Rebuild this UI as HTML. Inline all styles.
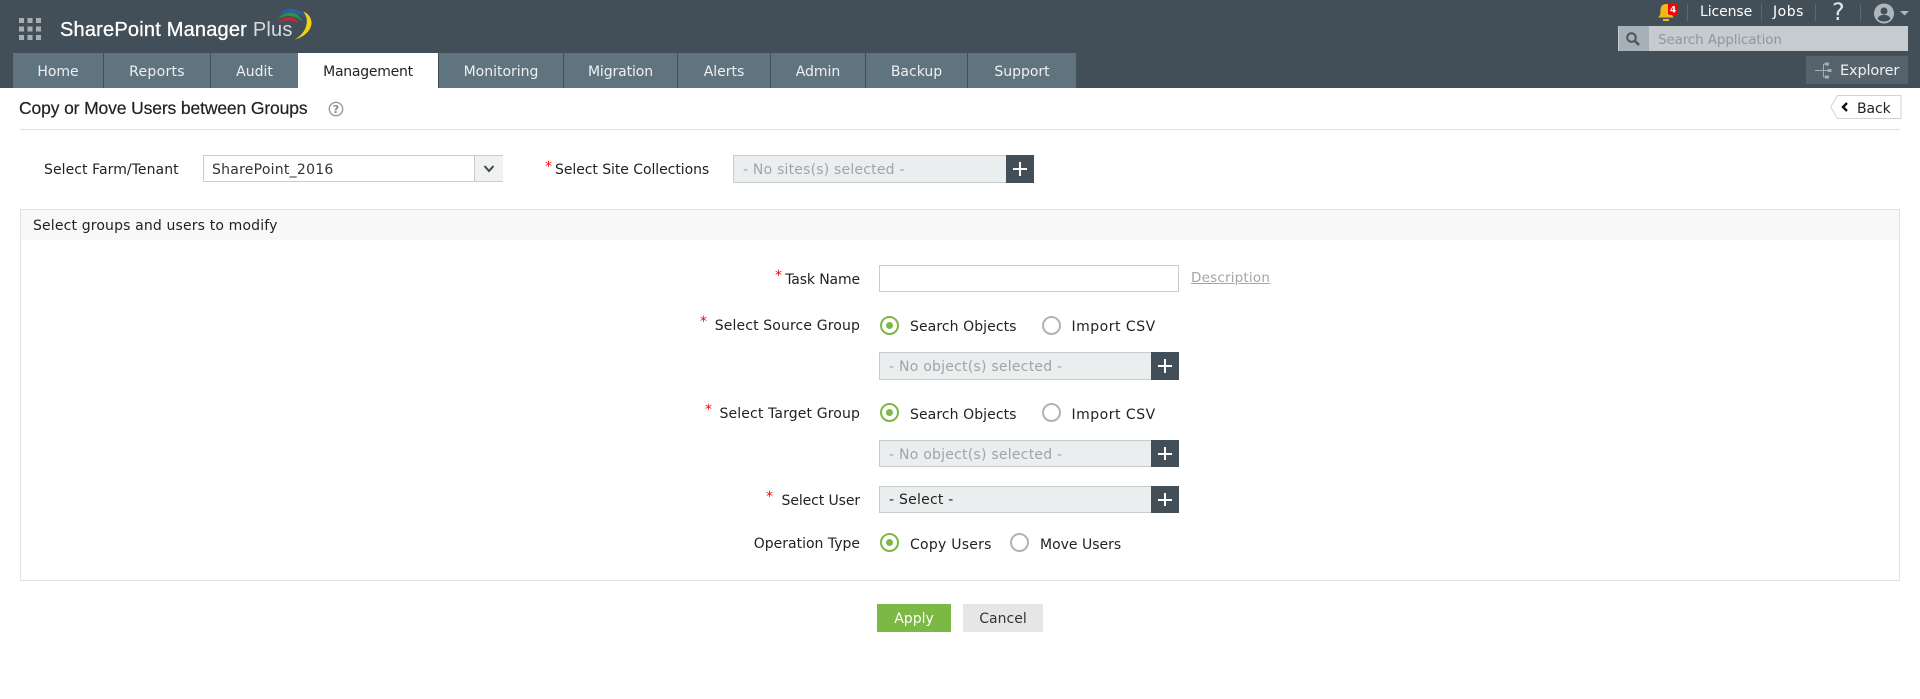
<!DOCTYPE html>
<html><head><meta charset="utf-8"><title>SharePoint Manager Plus</title>
<style>
html,body{margin:0;padding:0;background:#fff;width:1920px;height:699px;overflow:hidden}
body{font-family:"DejaVu Sans",sans-serif;font-size:14px;color:#222;position:relative}
.a{position:absolute;white-space:nowrap}
.t{position:absolute;white-space:nowrap;line-height:20px;height:20px}
.r{position:absolute;white-space:nowrap;line-height:20px;height:20px;right:1060px}
.star{position:absolute;color:#f00;line-height:20px;height:20px;font-size:14px}
#hd{position:absolute;left:0;top:0;width:1920px;height:88px;background:#434f58}
.tab{position:absolute;top:53px;height:35px;background:#60747f;color:#eef1f3;text-align:center;line-height:38px;font-size:14px}
.tab.on{background:#fff;color:#222}
.box{position:absolute;box-sizing:border-box;background:#ebeeef;border:1px solid #c9cccd;color:#a0a4a6;padding-left:9px;font-size:14px;line-height:28px;border-right:0;letter-spacing:.24px}
.plus{position:absolute;background:#434f58}
.plus:before{content:"";position:absolute;left:7px;right:7px;top:50%;height:2px;margin-top:-1px;background:#fff}
.plus:after{content:"";position:absolute;top:7px;bottom:7px;left:50%;width:2px;margin-left:-1px;background:#fff}
.rad{position:absolute;width:19px;height:19px;box-sizing:border-box;border-radius:50%;border:2px solid #aeb3b6;background:#fff}
.rad.on{border-color:#7cb844}
.rad.on:after{content:"";position:absolute;left:4px;top:4px;width:7px;height:7px;border-radius:50%;background:#7cb844}
</style></head><body>
<div id="hd"></div>
<svg class="a" style="left:19px;top:18px" width="23" height="23"><g fill="#a9aeb1"><rect width="5" height="5"/><rect x="8.500" width="5" height="5"/><rect x="17" width="5" height="5"/><rect y="8.500" width="5" height="5"/><rect x="8.500" y="8.500" width="5" height="5"/><rect x="17" y="8.500" width="5" height="5"/><rect y="17" width="5" height="5"/><rect x="8.500" y="17" width="5" height="5"/><rect x="17" y="17" width="5" height="5"/></g></svg>
<div class="a" style="left:60px;top:18px;line-height:24px;font-family:'Liberation Sans',sans-serif;font-size:20px;color:#fff;letter-spacing:.2px;-webkit-text-stroke:.3px #fff">SharePoint Manager <span style="color:#d8dcdf;-webkit-text-stroke:0">Plus</span></div>
<svg class="a" style="left:270px;top:4px" width="46" height="40" fill="none"><path d="M25 35.500C34 33 40.500 27 41.500 20C42 14 38 9 33 7.500C38 13 38 20 34 27C32 30 29 33 25 35.500Z" fill="#f0d313"/><path d="M9 10.500C14 4.500 24 3 30 7.500C33 9.500 35.500 12 36.500 14.500C31 9.500 22 7.500 15 9Z" fill="#2d5fa8"/><path d="M8 14.500C13 8.500 22 7 27 10.500C29 12 31.500 15 32.500 17.500C27 12.500 20 11 14 12.500Z" fill="#2c9440"/><path d="M8 19.500C12 13.500 19 11.500 24 14.500C26 15.500 28 18 28.500 20C24 16.500 19 15.500 14 16.500Z" fill="#d6202c"/></svg>

<div class="tab" style="left:13px;width:90px">Home</div>
<div class="tab" style="left:104px;width:106px;letter-spacing:.3px">Reports</div>
<div class="tab" style="left:211px;width:87px">Audit</div>
<div class="tab on" style="left:298px;width:140px;letter-spacing:-.25px">Management</div>
<div class="tab" style="left:439px;width:124px">Monitoring</div>
<div class="tab" style="left:564px;width:113px;letter-spacing:-.1px">Migration</div>
<div class="tab" style="left:678px;width:92px">Alerts</div>
<div class="tab" style="left:771px;width:94px">Admin</div>
<div class="tab" style="left:866px;width:101px">Backup</div>
<div class="tab" style="left:968px;width:108px">Support</div>

<svg class="a" style="left:1656px;top:2px" width="24" height="20"><path d="M2 15.500C4.500 13.500 4.500 11 4.500 8C4.500 4.500 6.500 2 10 2C13.500 2 15.500 4.500 15.500 8C15.500 11 15.500 13.500 18 15.500Z" fill="#f0b91a"/><rect x="7" y="17" width="6" height="2" fill="#f0b91a"/><rect x="12" y="1" width="10" height="12" rx="2" fill="#f00"/><text x="17" y="10.500" font-family="DejaVu Sans" font-size="9" font-weight="bold" fill="#fff" text-anchor="middle">4</text></svg>
<div class="a" style="left:1687px;top:4px;width:1px;height:17px;background:#5d6972"></div>
<div class="t" style="left:1700px;top:2px;color:#fff;letter-spacing:-.1px">License</div>
<div class="a" style="left:1761px;top:4px;width:1px;height:17px;background:#5d6972"></div>
<div class="t" style="left:1773px;top:2px;color:#fff;letter-spacing:.5px">Jobs</div>
<div class="a" style="left:1815px;top:4px;width:1px;height:17px;background:#5d6972"></div>
<div class="a" style="left:1832px;top:0;line-height:24px;font-size:24px;color:#e4e7e9">?</div>
<div class="a" style="left:1860px;top:4px;width:1px;height:17px;background:#5d6972"></div>
<svg class="a" style="left:1873px;top:3px" width="42" height="21"><circle cx="11" cy="10.500" r="10" fill="#aeb6bb"/><circle cx="11" cy="8" r="3.500" fill="#434f58"/><path d="M4.500 16C5.500 12.500 8 12 11 12C14 12 16.500 12.500 17.500 16C15.500 18 13 18.500 11 18.500C9 18.500 6.500 18 4.500 16Z" fill="#434f58"/><path d="M27 8H36L31.500 12.500Z" fill="#aeb6bb"/></svg>

<div class="a" style="left:1618px;top:26px;width:290px;height:25px;background:#c6cbcf"></div>
<div class="a" style="left:1619px;top:26px;width:30px;height:25px;background:#a7b0b6"></div>
<svg class="a" style="left:1625px;top:31px" width="16" height="16" fill="none" stroke="#4a555d"><circle cx="6.500" cy="6.500" r="4.300" stroke-width="2"/><path d="M10 10L14 14" stroke-width="2.600"/></svg>
<div class="t" style="left:1658px;top:30px;color:#8f979c;font-size:13.500px;letter-spacing:-.13px">Search Application</div>

<div class="a" style="left:1806px;top:56px;width:102px;height:28px;background:#56636c"></div>
<svg class="a" style="left:1815px;top:62px" width="17" height="17" fill="none" stroke="#a6aeb3" stroke-width="1"><path d="M0 8.500H15M8.500 2V15M8.500 2H12M8.500 15H12"/><rect x="10.500" y="1" width="3" height="2" fill="#a6aeb3"/><rect x="10.500" y="14" width="3" height="2" fill="#a6aeb3"/><rect x="13" y="7.500" width="3" height="2" fill="#a6aeb3"/></svg>
<div class="t" style="left:1840px;top:61px;color:#eef1f3;font-size:14.500px;letter-spacing:-.15px">Explorer</div>

<div class="a" style="left:19px;top:96px;line-height:24px;font-family:'Liberation Sans',sans-serif;font-size:17.500px;color:#222;letter-spacing:-.13px;-webkit-text-stroke:.2px #222">Copy or Move Users between Groups</div>
<svg class="a" style="left:328px;top:101px" width="16" height="16"><circle cx="8" cy="8" r="6.700" fill="none" stroke="#9a9a9a" stroke-width="1.400"/><text x="8" y="12" font-family="DejaVu Sans" font-size="11" font-weight="bold" fill="#8a8a8a" text-anchor="middle">?</text></svg>

<svg class="a" style="left:1830px;top:95px" width="72" height="25" fill="none"><path d="M71 .500H7.500L.700 12L7.500 23.500H71Z" fill="#fff" stroke="#d0d2d3"/><path d="M17 8L13 12L17 16" stroke="#111" stroke-width="2.400"/></svg>
<div class="t" style="left:1857px;top:98.500px;color:#222;letter-spacing:-.1px">Back</div>
<div class="a" style="left:20px;top:129px;width:1880px;height:1px;background:#e0e0e0"></div>

<div class="t" style="left:44px;top:160px;letter-spacing:.07px">Select Farm/Tenant</div>
<div class="a" style="left:203px;top:155px;width:300px;height:27px;box-sizing:border-box;border:1px solid #c9cccd;background:#fff"></div>
<div class="a" style="left:474px;top:156px;width:28px;height:25px;background:#f0f1f1;border-left:1px solid #c9cccd"></div>
<svg class="a" style="left:483px;top:164px" width="12" height="10" fill="none"><path d="M1.500 2L6 7L10.500 2" stroke="#3d474e" stroke-width="2"/></svg>
<div class="t" style="left:212px;top:160px;color:#333;letter-spacing:.25px">SharePoint_2016</div>
<div class="star" style="left:545px;top:157px">*</div>
<div class="t" style="left:555px;top:160px;letter-spacing:-.06px">Select Site Collections</div>
<div class="box" style="left:733px;top:155px;width:273px;height:28px;letter-spacing:.2px">- No sites(s) selected -</div>
<div class="plus" style="left:1006px;top:155px;width:28px;height:28px"></div>

<div class="a" style="left:20px;top:209px;width:1880px;height:372px;box-sizing:border-box;border:1px solid #e3e3e3"></div>
<div class="a" style="left:21px;top:210px;width:1878px;height:30px;background:#f8f8f8"></div>
<div class="t" style="left:33px;top:216px;letter-spacing:.15px">Select groups and users to modify</div>

<div class="star" style="left:775px;top:266px">*</div>
<div class="r" style="top:270px;letter-spacing:-.13px">Task Name</div>
<div class="a" style="left:879px;top:265px;width:300px;height:27px;box-sizing:border-box;border:1px solid #c9cccd"></div>
<div class="t" style="left:1191px;top:268px;color:#a5a5a5;text-decoration:underline;font-size:13.500px;letter-spacing:.2px">Description</div>

<div class="star" style="left:700px;top:312px">*</div>
<div class="r" style="top:316px;letter-spacing:.13px">Select Source Group</div>
<div class="rad on" style="left:880px;top:316px"></div>
<div class="t" style="left:910px;top:317px;letter-spacing:.08px">Search Objects</div>
<div class="rad" style="left:1042px;top:316px"></div>
<div class="t" style="left:1071.500px;top:317px;letter-spacing:.5px">Import CSV</div>
<div class="box" style="left:879px;top:352px;width:272px;height:28px">- No object(s) selected -</div>
<div class="plus" style="left:1151px;top:352px;width:28px;height:28px"></div>

<div class="star" style="left:705px;top:400px">*</div>
<div class="r" style="top:404px;letter-spacing:.13px">Select Target Group</div>
<div class="rad on" style="left:880px;top:403px"></div>
<div class="t" style="left:910px;top:405px;letter-spacing:.08px">Search Objects</div>
<div class="rad" style="left:1042px;top:403px"></div>
<div class="t" style="left:1071.500px;top:405px;letter-spacing:.5px">Import CSV</div>
<div class="box" style="left:879px;top:440px;width:272px;height:27px">- No object(s) selected -</div>
<div class="plus" style="left:1151px;top:440px;width:28px;height:27px"></div>

<div class="star" style="left:766px;top:487px">*</div>
<div class="r" style="top:491px;letter-spacing:-.1px">Select User</div>
<div class="box" style="left:879px;top:486px;width:272px;height:27px;color:#222;line-height:27px">- Select -</div>
<div class="plus" style="left:1151px;top:486px;width:28px;height:27px"></div>

<div class="r" style="top:534px">Operation Type</div>
<div class="rad on" style="left:880px;top:533px"></div>
<div class="t" style="left:910px;top:534.500px;letter-spacing:.25px">Copy Users</div>
<div class="rad" style="left:1010px;top:533px"></div>
<div class="t" style="left:1040px;top:534.500px">Move Users</div>

<div class="a" style="left:877px;top:604px;width:74px;height:28px;background:#7cb844;color:#fff;text-align:center;line-height:30px">Apply</div>
<div class="a" style="left:963px;top:604px;width:80px;height:28px;background:#e6e6e6;color:#333;text-align:center;line-height:30px">Cancel</div>
</body></html>
